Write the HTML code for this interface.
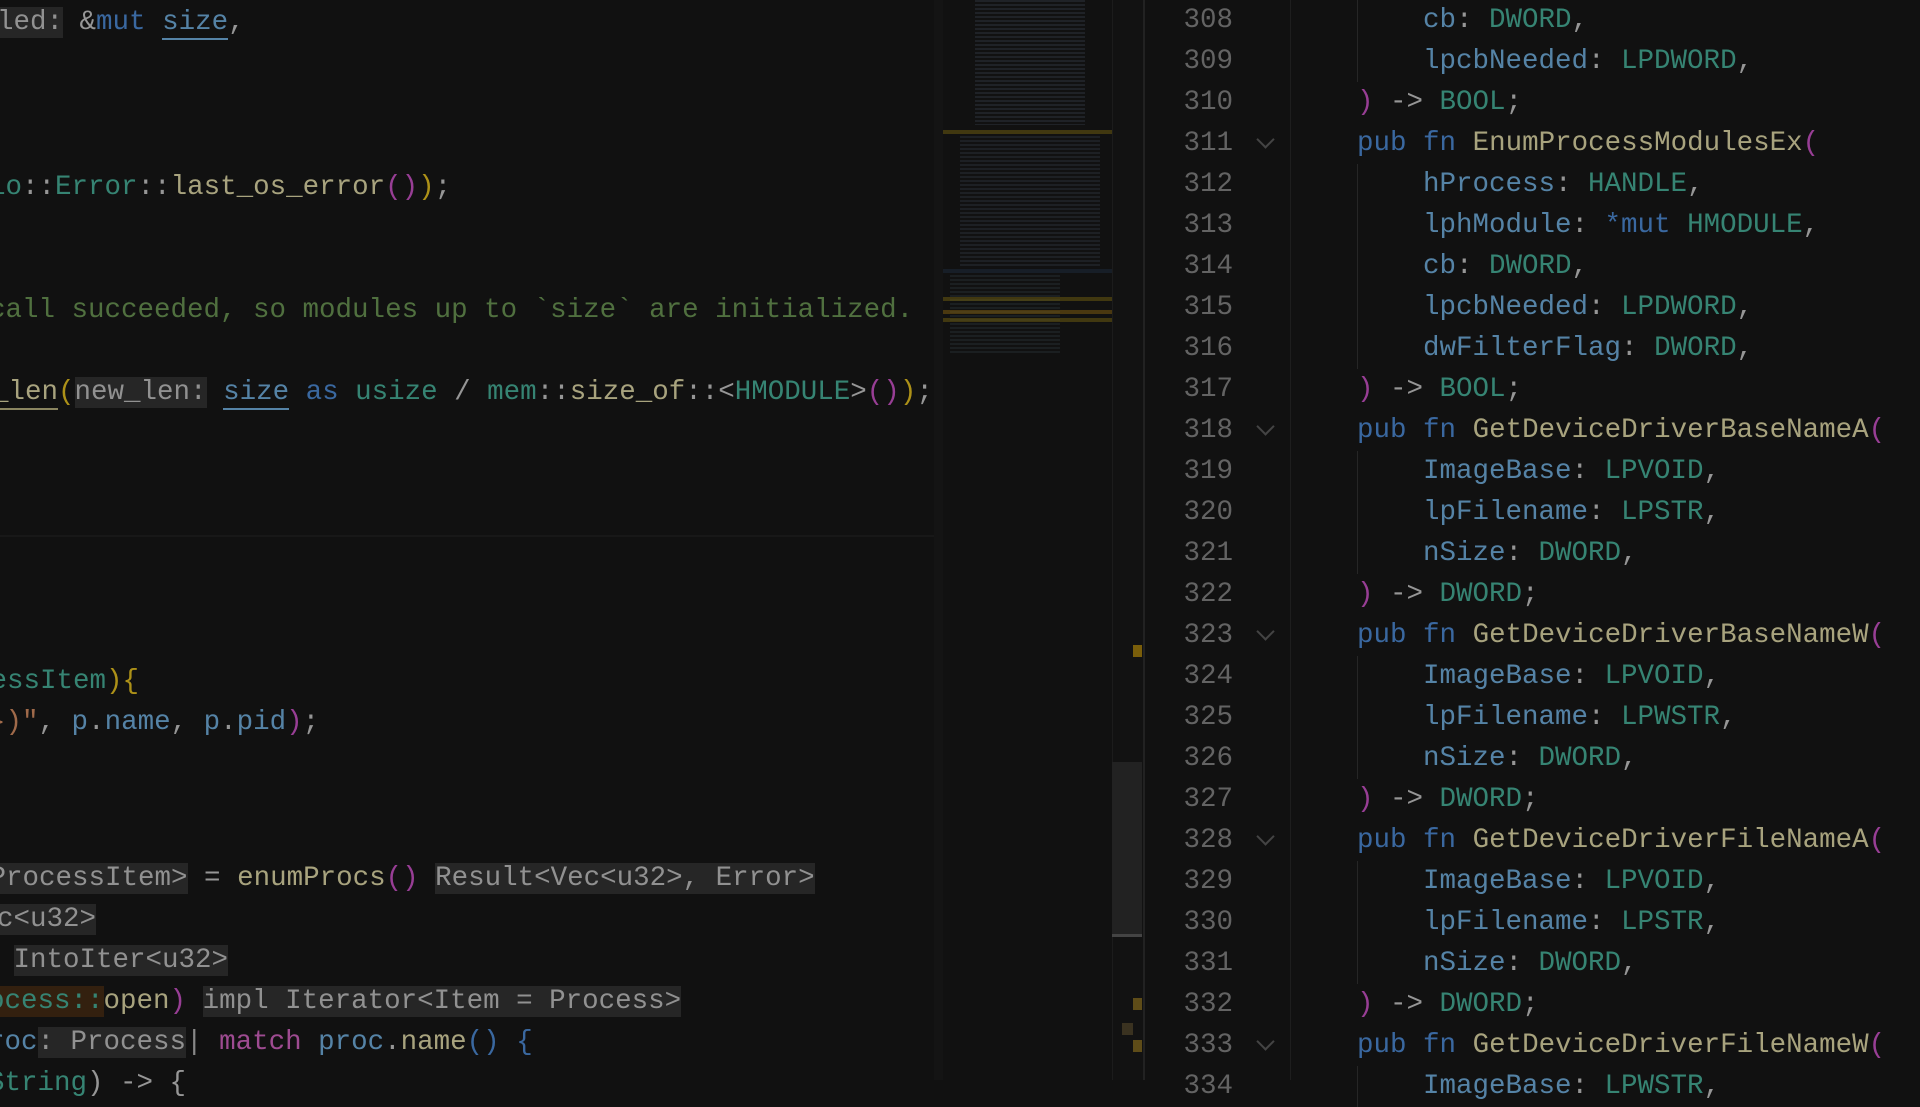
<!DOCTYPE html>
<html><head><meta charset="utf-8"><style>
body{margin:0;width:1920px;height:1080px;background:#111;overflow:hidden;position:relative;font-family:"Liberation Mono",monospace;font-size:27.5px;color:#969696}
.l{position:absolute;white-space:pre;line-height:41px;height:41px;top:0}
.p{color:#5583a6}.t{color:#368473}.f{color:#a8a37e}.k{color:#3a68a0}.c{color:#50703f}.g{color:#969696}.m{color:#983e95}.y{color:#ad9118}.pk{color:#9e4b91}
.h{background:#262626;color:#919191}
.u{border-bottom:2px solid #5583a6}
.n{position:absolute;left:1140px;width:93px;text-align:right;color:#636363;line-height:41px;white-space:pre}
.ch{position:absolute;left:1259px;width:11px;height:11px;border-right:2px solid #444;border-bottom:2px solid #444;transform:rotate(45deg)}
.mm{position:absolute;height:3px;opacity:.55}
</style></head><body>
<div class="l" style="left:-3px;top:2px"><span class="h">led:</span> <span class="g">&amp;</span><span class="k">mut</span> <span class="p u">size</span>,</div>
<div class="l" style="left:-11px;top:167px"><span class="t">io</span>::<span class="t">Error</span>::<span class="f">last_os_error</span><span class="m">(</span><span class="m">)</span><span class="y">)</span>;</div>
<div class="l c" style="left:-11px;top:290px">call succeeded, so modules up to `size` are initialized.</div>
<div class="l" style="left:-24.5px;top:372px"><span class="f u" style="border-color:#8a8560">t_len</span><span class="y">(</span><span class="h">new_len:</span> <span class="p u">size</span> <span class="k">as</span> <span class="t">usize</span> / <span class="t">mem</span>::<span class="f">size_of</span>::&lt;<span class="t">HMODULE</span>&gt;<span class="m">()</span><span class="y">)</span>;</div>
<div style="position:absolute;left:0;top:535px;width:934px;height:2px;background:#181818"></div>
<div class="l" style="left:-9.5px;top:661px"><span class="t">essItem</span><span class="y">){</span></div>
<div class="l" style="left:-11px;top:702px"><span style="color:#a06a4a">})"</span>, <span class="p">p</span>.<span class="p">name</span>, <span class="p">p</span>.<span class="p">pid</span><span class="m">)</span>;</div>
<div class="l" style="left:-10.5px;top:858px"><span class="h">ProcessItem&gt;</span> = <span class="f">enumProcs</span><span class="m">()</span> <span class="h">Result&lt;Vec&lt;u32&gt;, Error&gt;</span></div>
<div class="l" style="left:-3px;top:899px"><span class="h">c&lt;u32&gt;</span></div>
<div class="l" style="left:-3px;top:940px"> <span class="h">IntoIter&lt;u32&gt;</span></div>
<div class="l" style="left:-12px;top:981px"><span class="t" style="background:#33200f">ocess::</span><span class="f">open</span><span class="m">)</span> <span class="h">impl Iterator&lt;Item = Process&gt;</span></div>
<div class="l" style="left:-12px;top:1022px"><span class="p">roc</span><span class="h">: Process</span><span style="color:#888">|</span> <span class="pk">match</span> <span class="p">proc</span>.<span class="f">name</span><span class="k">()</span> <span class="k">{</span></div>
<div class="l" style="left:-12px;top:1063px"><span class="t">String</span>) -&gt; {</div>
<div style="position:absolute;left:934px;top:0;width:9px;height:1080px;background:#141414"></div>
<div style="position:absolute;left:975px;top:0;width:110px;height:125px;background:repeating-linear-gradient(#252a30 0 2px,transparent 2px 4px);opacity:.7"></div>
<div style="position:absolute;left:960px;top:136px;width:140px;height:130px;background:repeating-linear-gradient(#252a30 0 2px,transparent 2px 4px);opacity:.6"></div>
<div style="position:absolute;left:950px;top:275px;width:110px;height:80px;background:repeating-linear-gradient(#22282c 0 2px,transparent 2px 4px);opacity:.6"></div>
<div class="mm" style="left:943px;top:130px;width:169px;background:#6a5a10;height:4px"></div>
<div class="mm" style="left:943px;top:269px;width:169px;background:#1d2a3a;height:4px"></div>
<div class="mm" style="left:943px;top:297px;width:169px;background:#6a5a10;height:4px"></div>
<div class="mm" style="left:943px;top:310px;width:169px;background:#7a5a10;height:4px"></div>
<div class="mm" style="left:943px;top:318px;width:169px;background:#6a5a10;height:4px"></div>
<div style="position:absolute;left:1112px;top:0;width:30px;height:1080px;background:#121212;border-left:1px solid #1c1c1c"></div>
<div style="position:absolute;left:1112px;top:762px;width:30px;height:172px;background:#222"></div>
<div style="position:absolute;left:1112px;top:934px;width:30px;height:3px;background:#444"></div>
<div style="position:absolute;left:1133px;top:645px;width:9px;height:12px;background:#7a5e0a"></div>
<div style="position:absolute;left:1133px;top:998px;width:9px;height:12px;background:#5e4c18"></div>
<div style="position:absolute;left:1122px;top:1023px;width:11px;height:12px;background:#3a3220"></div>
<div style="position:absolute;left:1133px;top:1040px;width:9px;height:12px;background:#5e4c18"></div>
<div style="position:absolute;left:1143px;top:0;width:2px;height:1080px;background:#222"></div>
<div style="position:absolute;left:1290px;top:0;width:1px;height:1080px;background:#1e1e1e"></div>
<div id="r"></div>
<script>
var L=[
[308,1,'<span class="p">cb</span>: <span class="t">DWORD</span>,'],
[309,1,'<span class="p">lpcbNeeded</span>: <span class="t">LPDWORD</span>,'],
[310,0,'<span class="m">)</span> -&gt; <span class="t">BOOL</span>;'],
[311,2,'<span class="k">pub</span> <span class="k">fn</span> <span class="f">EnumProcessModulesEx</span><span class="m">(</span>'],
[312,1,'<span class="p">hProcess</span>: <span class="t">HANDLE</span>,'],
[313,1,'<span class="p">lphModule</span>: <span class="k">*mut</span> <span class="t">HMODULE</span>,'],
[314,1,'<span class="p">cb</span>: <span class="t">DWORD</span>,'],
[315,1,'<span class="p">lpcbNeeded</span>: <span class="t">LPDWORD</span>,'],
[316,1,'<span class="p">dwFilterFlag</span>: <span class="t">DWORD</span>,'],
[317,0,'<span class="m">)</span> -&gt; <span class="t">BOOL</span>;'],
[318,2,'<span class="k">pub</span> <span class="k">fn</span> <span class="f">GetDeviceDriverBaseNameA</span><span class="m">(</span>'],
[319,1,'<span class="p">ImageBase</span>: <span class="t">LPVOID</span>,'],
[320,1,'<span class="p">lpFilename</span>: <span class="t">LPSTR</span>,'],
[321,1,'<span class="p">nSize</span>: <span class="t">DWORD</span>,'],
[322,0,'<span class="m">)</span> -&gt; <span class="t">DWORD</span>;'],
[323,2,'<span class="k">pub</span> <span class="k">fn</span> <span class="f">GetDeviceDriverBaseNameW</span><span class="m">(</span>'],
[324,1,'<span class="p">ImageBase</span>: <span class="t">LPVOID</span>,'],
[325,1,'<span class="p">lpFilename</span>: <span class="t">LPWSTR</span>,'],
[326,1,'<span class="p">nSize</span>: <span class="t">DWORD</span>,'],
[327,0,'<span class="m">)</span> -&gt; <span class="t">DWORD</span>;'],
[328,2,'<span class="k">pub</span> <span class="k">fn</span> <span class="f">GetDeviceDriverFileNameA</span><span class="m">(</span>'],
[329,1,'<span class="p">ImageBase</span>: <span class="t">LPVOID</span>,'],
[330,1,'<span class="p">lpFilename</span>: <span class="t">LPSTR</span>,'],
[331,1,'<span class="p">nSize</span>: <span class="t">DWORD</span>,'],
[332,0,'<span class="m">)</span> -&gt; <span class="t">DWORD</span>;'],
[333,2,'<span class="k">pub</span> <span class="k">fn</span> <span class="f">GetDeviceDriverFileNameW</span><span class="m">(</span>'],
[334,1,'<span class="p">ImageBase</span>: <span class="t">LPWSTR</span>,']];
var h='';
L.forEach(function(a,i){var top=41*i;
h+='<div class="n" style="top:'+top+'px">'+a[0]+'</div>';
if(a[1]==2)h+='<div class="ch" style="top:'+(top+10)+'px"></div>';
h+='<div class="l" style="left:'+(a[1]==1?1423:1357)+'px;top:'+top+'px">'+a[2]+'</div>';
});
for(var i=0;i<L.length;i++){if(L[i][1]==1){var j=i;while(j<L.length&&L[j][1]==1)j++;h+='<div style="position:absolute;left:1357px;width:1px;background:#262626;top:'+(41*i)+'px;height:'+(41*(j-i))+'px"></div>';i=j-1;}}
document.getElementById('r').innerHTML=h;
</script>
</body></html>
